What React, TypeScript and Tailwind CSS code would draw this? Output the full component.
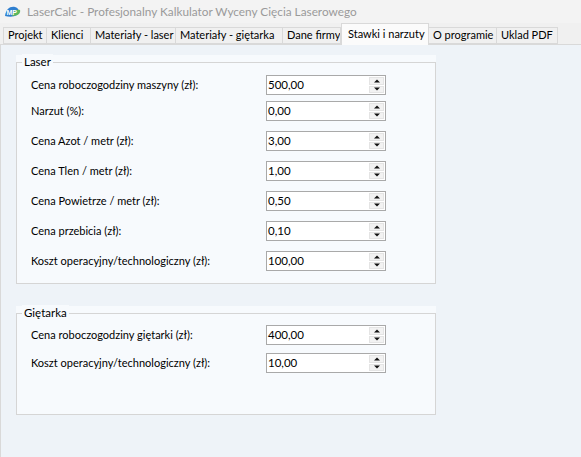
import React from 'react';

const tabs = [
  { name: 'Projekt', w: 'w-[44px]' },
  { name: 'Klienci', w: 'w-[44px]' },
  { name: 'Materiały - laser', w: 'w-[85px]' },
  { name: 'Materiały - giętarka', w: 'w-[107px]' },
  { name: 'Dane firmy', w: 'w-[58px]' },
  { name: 'Stawki i narzuty', w: 'w-[88px]' },
  { name: 'O programie', w: 'w-[68px]' },
  { name: 'Uklad PDF', w: 'w-[61px]' },
];

const laserRows = [
  { label: 'Cena roboczogodziny maszyny (zł):', value: '500,00', gap: 'mt-[12px]' },
  { label: 'Narzut (%):', value: '0,00', gap: 'mt-[6px]' },
  { label: 'Cena Azot / metr (zł):', value: '3,00', gap: 'mt-[10px]' },
  { label: 'Cena Tlen / metr (zł):', value: '1,00', gap: 'mt-[10px]' },
  { label: 'Cena Powietrze / metr (zł):', value: '0,50', gap: 'mt-[10px]' },
  { label: 'Cena przebicia (zł):', value: '0,10', gap: 'mt-[10px]' },
  { label: 'Koszt operacyjny/technologiczny (zł):', value: '100,00', gap: 'mt-[10px]' },
];

const bendRows = [
  { label: 'Cena roboczogodziny giętarki (zł):', value: '400,00', gap: 'mt-[11px]' },
  { label: 'Koszt operacyjny/technologiczny (zł):', value: '10,00', gap: 'mt-[8px]' },
];

const AppIcon = () => (
  <svg width="17" height="13" viewBox="0 0 17 13">
    <path d="M1 11 C2 4, 6 1, 11 2 C15 3, 16 7, 13 10 C10 12, 5 12, 1 11 Z" fill="#2f7fd0" />
    <path d="M8 11 C9 6, 12 4, 16 5 C17 8, 14 11, 8 11 Z" fill="#5cb85c" />
    <text x="2.5" y="10" fontSize="7" fontWeight="700" fill="#ffffff" fontFamily="Liberation Sans, sans-serif">MP</text>
  </svg>
);

const Spinner = ({ value }: { value: string }) => (
  <div className="flex h-[20px] w-[120px] shrink-0 items-stretch border border-[#a9a9a9] bg-white">
    <div className="flex-1 pl-[1px] text-[11.5px] leading-[18px] text-black">{value}</div>
    <div className="my-[1px] mr-[1px] flex w-[15px] flex-col gap-px">
      <div className="flex flex-1 items-center justify-center border border-[#e4e4e4] bg-[#f2f2f2]">
        <svg width="6" height="4" viewBox="0 0 6 4"><path d="M3 0.5 L6 3.5 L0 3.5 Z" fill="#111" /></svg>
      </div>
      <div className="flex flex-1 items-center justify-center border border-[#e4e4e4] bg-[#f2f2f2]">
        <svg width="6" height="4" viewBox="0 0 6 4"><path d="M0 0.5 L6 0.5 L3 3.5 Z" fill="#111" /></svg>
      </div>
    </div>
  </div>
);

const Row = ({ label, value, gap }: { label: string; value: string; gap: string }) => (
  <div className={`${gap} flex items-center`}>
    <div className="w-[249px] shrink-0 whitespace-nowrap pl-[14px] text-[11px] text-black">{label}</div>
    <Spinner value={value} />
  </div>
);

const GroupBox = ({ title, height, children }: { title: string; height: string; children: React.ReactNode }) => (
  <div className="ml-[14px] w-[420px] bg-[#f7fafd] pt-[7px]">
    <div className={`relative ${height} border border-[#d5d5d5]`}>
      <span className="absolute -top-[9px] left-[5px] bg-[#f7fafd] px-[2px] text-[11.5px] leading-[16px] text-black">
        {title}
      </span>
      {children}
    </div>
  </div>
);

export default function App() {
  return (
    <div
      className="flex h-[457px] w-[581px] flex-col overflow-hidden bg-[#f0f0f0]"
      style={{ fontFamily: 'Lato, "Noto Sans", sans-serif' }}
    >
      {/* title bar */}
      <div className="flex h-[23px] shrink-0 items-center gap-[6px] bg-[#f3f3f3] pl-[4px]">
        <AppIcon />
        <span className="whitespace-nowrap text-[11.8px] text-[#9a9a9a]">
          LaserCalc - Profesjonalny Kalkulator Wyceny Cięcia Laserowego
        </span>
      </div>

      {/* tabs */}
      <div className="flex h-[21px] shrink-0 items-end pl-[3px]">
        {tabs.map((t, i) => {
          const active = t.name === 'Stawki i narzuty';
          return (
            <div
              key={t.name}
              className={
                active
                  ? `relative z-10 -mb-px flex h-[22px] shrink-0 items-start whitespace-nowrap border border-b-0 border-[#d9d9d9] bg-[#fbfbfb] pl-[6px] pt-[2px] text-[11px] text-black ${t.w}`
                  : `flex h-[17px] shrink-0 items-center overflow-hidden whitespace-nowrap border border-[#d9d9d9] bg-[#f0f0f0] pl-[4px] text-[11px] text-black ${t.w} ${i === 0 ? '' : 'border-l-0'}`
              }
            >
              {t.name}
            </div>
          );
        })}
      </div>

      {/* tab page */}
      <div className="flex-1 border-t border-l border-[#d9d9d9] bg-[#eef3f8] pl-[1px] pt-[10px]">
        <GroupBox title="Laser" height="h-[222px]">
          {laserRows.map((r) => (
            <Row key={r.label} {...r} />
          ))}
        </GroupBox>
        <div className="h-[22px]" />
        <GroupBox title="Giętarka" height="h-[102px]">
          {bendRows.map((r) => (
            <Row key={r.label} {...r} />
          ))}
        </GroupBox>
      </div>
    </div>
  );
}
